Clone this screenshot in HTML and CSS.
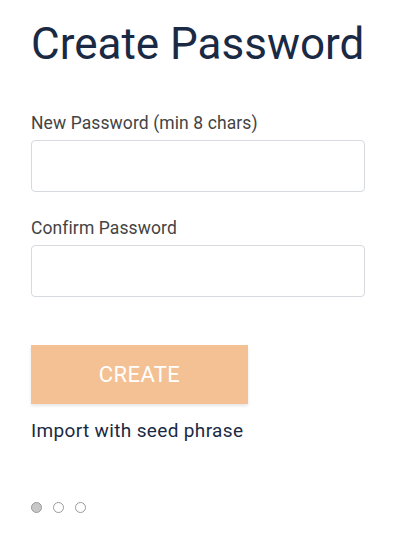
FILE: index.html
```html
<!DOCTYPE html>
<html>
<head>
<meta charset="utf-8">
<link rel="stylesheet" href="styles.css">
</head>
<body>
<div class="page">
  <h1 class="title">Create Password</h1>
  <form class="form">
    <label class="field">
      <span class="label">New Password (min 8 chars)</span>
      <input class="input" type="password">
    </label>
    <label class="field">
      <span class="label">Confirm Password</span>
      <input class="input" type="password">
    </label>
    <button class="btn" type="button">CREATE</button>
    <a class="link">Import with seed phrase</a>
  </form>
  <div class="dots">
    <span class="dot active"></span>
    <span class="dot"></span>
    <span class="dot"></span>
  </div>
</div>
</body>
</html>
```
FILE: styles.css
```css
html, body {
  margin: 0;
  padding: 0;
  background: #fff;
}
body {
  font-family: Roboto, "Liberation Sans", sans-serif;
}
.page {
  width: 400px;
  height: 539px;
  box-sizing: border-box;
  padding: 18px 35px 0 31px;
  display: flex;
  flex-direction: column;
}
.title {
  margin: 0;
  font-size: 44px;
  font-weight: 400;
  line-height: 52px;
  color: #1a2a44;
}
.form {
  display: flex;
  flex-direction: column;
  margin-top: 43px;
}
.field {
  display: flex;
  flex-direction: column;
  margin-bottom: 26px;
}
.label {
  font-size: 17.5px;
  line-height: 20px;
  color: #444;
  letter-spacing: 0.1px;
  margin-bottom: 7px;
}
.input {
  height: 52px;
  box-sizing: border-box;
  border: 1px solid #d6d9dd;
  border-radius: 4px;
  outline: none;
  padding: 0 12px;
  font-size: 16px;
}
.btn {
  margin-top: 22px;
  width: 217px;
  height: 59px;
  border: none;
  background: #f4c194;
  color: #fff;
  font-family: Roboto, "Liberation Sans", sans-serif;
  font-size: 22px;
  font-weight: 400;
  letter-spacing: 0.4px;
  box-shadow: 0 2px 3px rgba(0,0,0,0.1);
  padding: 0;
}
.link {
  margin-top: 16px;
  font-size: 19px;
  line-height: 22px;
  letter-spacing: 0.35px;
  color: #1a2a44;
}
.dots {
  display: flex;
  gap: 11px;
  margin-top: 60px;
}
.dot {
  width: 11px;
  height: 11px;
  box-sizing: border-box;
  border: 1.5px solid #9a9a9a;
  border-radius: 50%;
}
.dot.active {
  background: #c8c8c8;
}
```
